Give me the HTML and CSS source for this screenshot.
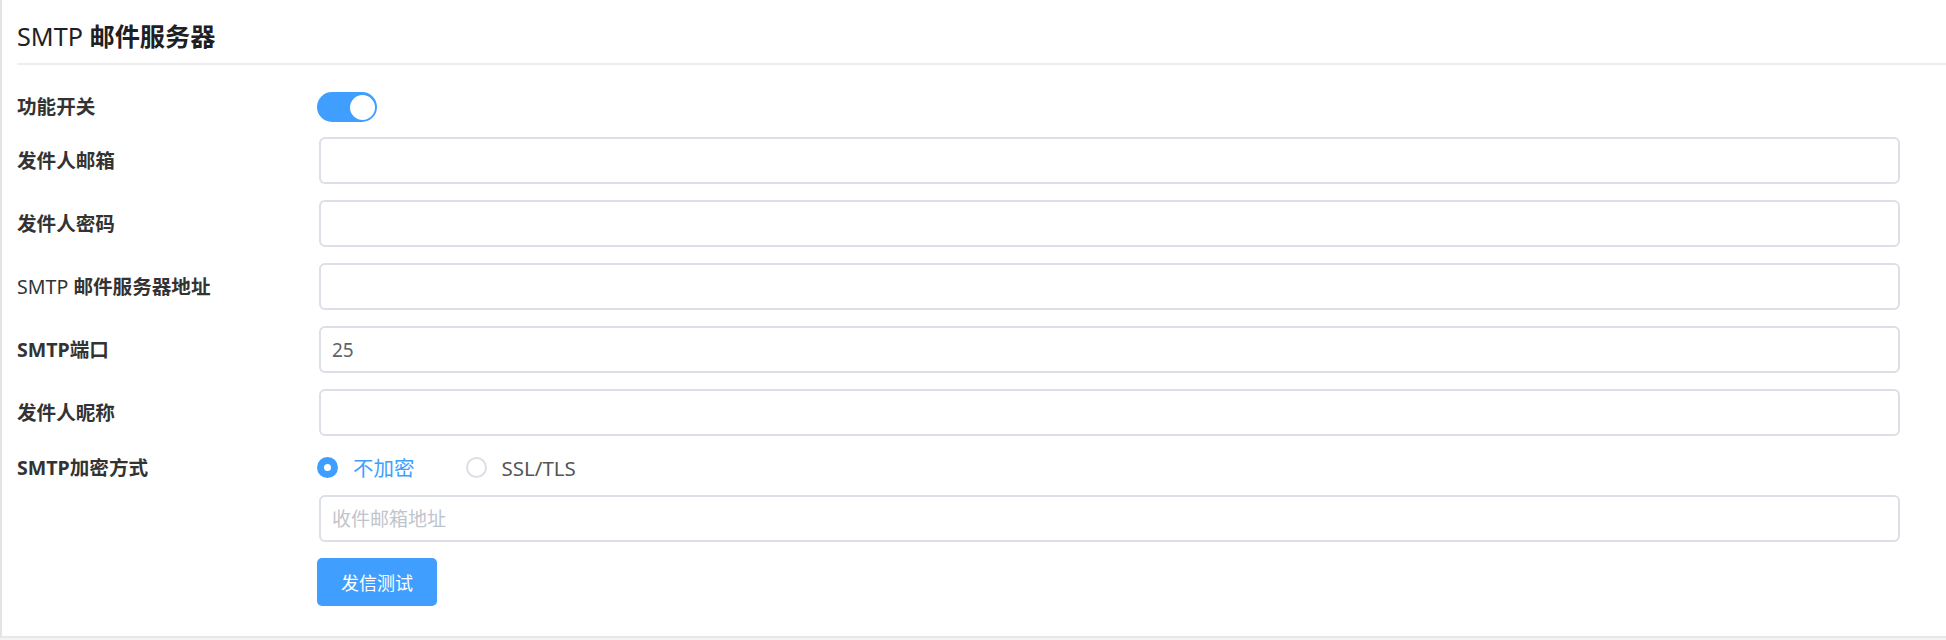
FILE: index.html
```html
<!DOCTYPE html>
<html lang="zh-CN">
<head>
<meta charset="utf-8">
<title>SMTP 邮件服务器</title>
<link rel="stylesheet" href="styles.css">
</head>
<body>
<div class="panel">
  <div class="header"><h1 class="title"><span class="latin">SMTP</span> 邮件服务器</h1></div>
  <form class="form">
    <div class="row row-switch">
      <label class="label">功能开关</label>
      <div class="control">
        <span class="switch on"><span class="knob"></span></span>
      </div>
    </div>
    <div class="row row-input">
      <label class="label">发件人邮箱</label>
      <div class="control"><input class="input" type="text"></div>
    </div>
    <div class="row row-input">
      <label class="label">发件人密码</label>
      <div class="control"><input class="input" type="password"></div>
    </div>
    <div class="row row-input">
      <label class="label"><span class="latin">SMTP</span> 邮件服务器地址</label>
      <div class="control"><input class="input" type="text"></div>
    </div>
    <div class="row row-input">
      <label class="label">SMTP端口</label>
      <div class="control"><input class="input" type="text" value="25"></div>
    </div>
    <div class="row row-input">
      <label class="label">发件人昵称</label>
      <div class="control"><input class="input" type="text"></div>
    </div>
    <div class="row row-radio">
      <label class="label">SMTP加密方式</label>
      <div class="control radios">
        <span class="radio checked"><span class="radio-dot"></span><span class="radio-text">不加密</span></span>
        <span class="radio"><span class="radio-dot"></span><span class="radio-text">SSL/TLS</span></span>
      </div>
    </div>
    <div class="row row-input row-tight">
      <span class="label"></span>
      <div class="control"><input class="input" type="text" placeholder="收件邮箱地址"></div>
    </div>
    <div class="row row-button">
      <span class="label"></span>
      <div class="control"><button type="button" class="btn">发信测试</button></div>
    </div>
  </form>
</div>
</body>
</html>
```

FILE: styles.css
```css
html, body {
  margin: 0;
  padding: 0;
}
body {
  background: #f4f4f5;
  font-family: "Noto Sans", "Noto Sans CJK SC", sans-serif;
  color: #303133;
  height: 640px;
  overflow: hidden;
}
.panel {
  background: #ffffff;
  border-left: 2px solid #e4e4e4;
  border-bottom: 2px solid #e8e8e8;
  height: 636px;
  box-sizing: content-box;
  padding-left: 15px;
}
.header {
  border-bottom: 2px solid #ededed;
  box-sizing: border-box;
  padding-top: 19px;
  height: 65px;
}
.title {
  margin: 0;
  font-size: 25.2px;
  line-height: 34px;
  font-weight: 700;
  color: #1f2021;
}
.latin {
  font-weight: 400;
}
.form {
  display: flex;
  flex-direction: column;
  padding: 27px 46px 0 0;
  margin: 0;
}
.row {
  display: flex;
  align-items: center;
}
.label {
  width: 300px;
  flex: none;
  font-size: 19.6px;
  font-weight: 700;
  color: #333333;
  line-height: 28px;
}
.control {
  flex: 1;
  display: flex;
  align-items: center;
  min-width: 0;
}
.row-switch {
  height: 30px;
  margin-bottom: 15px;
}
.row-input {
  height: 47px;
  margin-bottom: 16px;
}
.row-radio {
  height: 31px;
  margin-bottom: 12px;
}
.row-button {
  height: 48px;
}
.switch {
  width: 60px;
  height: 30px;
  border-radius: 15px;
  background: #409eff;
  display: flex;
  align-items: center;
  justify-content: flex-end;
  padding: 0 2px;
  box-sizing: border-box;
}
.knob {
  width: 25px;
  height: 25px;
  border-radius: 50%;
  background: #ffffff;
}
.input {
  flex: 1;
  margin-left: 2px;
  height: 47px;
  box-sizing: border-box;
  border: 2px solid #dcdfe6;
  border-radius: 6px;
  padding: 0 11px;
  font-family: "Noto Sans", "Noto Sans CJK SC", sans-serif;
  font-size: 19px;
  color: #606266;
  background: #ffffff;
  outline: none;
  min-width: 0;
}
.input::placeholder {
  color: #c0c4cc;
}
.radio {
  display: flex;
  align-items: center;
  font-size: 20.5px;
  color: #555555;
  margin-right: 51px;
}
.radio-dot {
  width: 21px;
  height: 21px;
  box-sizing: border-box;
  border-radius: 50%;
  border: 2px solid #dcdfe6;
  background: #ffffff;
  margin-right: 15px;
  display: flex;
  align-items: center;
  justify-content: center;
}
.radio.checked .radio-dot {
  background: #409eff;
  border-color: #409eff;
}
.radio.checked .radio-dot::after {
  content: "";
  width: 7px;
  height: 7px;
  border-radius: 50%;
  background: #ffffff;
}
.radio.checked .radio-text {
  color: #409eff;
}
.radio-text {
  line-height: 28px;
}
.btn {
  width: 120px;
  height: 48px;
  border: none;
  border-radius: 5px;
  background: #409eff;
  color: #ffffff;
  font-family: "Noto Sans", "Noto Sans CJK SC", sans-serif;
  font-size: 18px;
  padding: 0;
  cursor: pointer;
}
```
